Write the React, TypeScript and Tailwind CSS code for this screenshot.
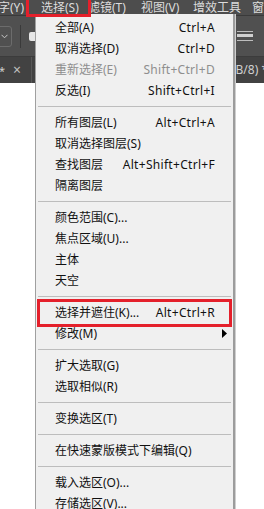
const FONT = { fontFamily: '"Noto Sans", "Noto Sans CJK SC", sans-serif' }

type Item = { label: string; key?: string; disabled?: boolean; marked?: boolean; sub?: boolean }

const groups: Item[][] = [
  [
    { label: '全部(A)', key: 'Ctrl+A' },
    { label: '取消选择(D)', key: 'Ctrl+D' },
    { label: '重新选择(E)', key: 'Shift+Ctrl+D', disabled: true },
    { label: '反选(I)', key: 'Shift+Ctrl+I' },
  ],
  [
    { label: '所有图层(L)', key: 'Alt+Ctrl+A' },
    { label: '取消选择图层(S)' },
    { label: '查找图层', key: 'Alt+Shift+Ctrl+F' },
    { label: '隔离图层' },
  ],
  [
    { label: '颜色范围(C)...' },
    { label: '焦点区域(U)...' },
    { label: '主体' },
    { label: '天空' },
  ],
  [
    { label: '选择并遮住(K)...', key: 'Alt+Ctrl+R', marked: true },
    { label: '修改(M)', sub: true },
  ],
  [{ label: '扩大选取(G)' }, { label: '选取相似(R)' }],
  [{ label: '变换选区(T)' }],
  [{ label: '在快速蒙版模式下编辑(Q)' }],
  [{ label: '载入选区(O)...' }, { label: '存储选区(V)...' }],
]

const menuBar = [
  { label: '文字(Y)', w: 'w-[55px]' },
  { label: '选择(S)', w: 'w-[47px]' },
  { label: '滤镜(T)', w: 'w-[53px]' },
  { label: '视图(V)', w: 'w-[52px]' },
  { label: '增效工具', w: 'w-[59px]' },
  { label: '窗口(W)', w: 'w-[60px]' },
]

export default function App() {
  return (
    <div className="relative w-[264px] h-[509px] overflow-hidden bg-white" style={FONT}>
      {/* Menu bar */}
      <div className="flex h-[15px] ml-[-14px] bg-[#4d4d4d] text-[12px] leading-[15px] text-[#dcdcdc] whitespace-nowrap">
        {menuBar.map(m => (
          <span key={m.label} className={`${m.w} shrink-0`}>{m.label}</span>
        ))}
      </div>
      <div className="h-px bg-[#3a3a3a]" />

      {/* Options bar */}
      <div className="flex h-[40px] items-center bg-[#505050]">
        <div className="ml-[-10px] flex h-[21px] w-[22px] shrink-0 items-center justify-end rounded-[3px] border border-[#6c6c6c] pr-[3px]">
          <svg width="7" height="5" viewBox="0 0 7 5">
            <path d="M0.5 0.8 L3.5 3.8 L6.5 0.8" fill="none" stroke="#c8c8c8" strokeWidth="1" />
          </svg>
        </div>
        <div className="ml-[8px] h-[23px] w-px bg-[#3a3a3a]" />
        <div className="ml-[8px] h-[9px] w-[8px] rounded-[2px] bg-[#e6e6e6]" />
        <div className="ml-auto mr-[11px] flex w-[16px] flex-col gap-[2px]">
          <div className="h-px bg-[#bdbdbd]" />
          <div className="h-[3px] bg-[#d0d0d0]" />
          <div className="mt-[1px] h-px bg-[#bdbdbd]" />
        </div>
      </div>

      {/* Document tabs */}
      <div className="flex h-[27px] items-center border-t border-[#3c3c3c] bg-[#424242] text-[12px] text-[#d0d0d0] whitespace-nowrap">
        <span className="ml-[-1px] text-[11px] leading-none">*</span>
        <span className="ml-[8px] text-[14px] leading-none text-[#c0c0c0]">×</span>
        <div className="ml-[10px] h-full w-px bg-[#575757]" />
        <span className="ml-auto mr-[-4px]">图层 1, RGB/8) *</span>
      </div>

      {/* Select menu */}
      <div className="absolute left-[35px] top-[14px] w-[198px] border-l border-[#a0a0a0] bg-[#f0f0f0] pt-[3px] pb-[20px] text-[12px] shadow-[2px_0_0_#9c9c9c,3px_0_0_#cfcfcf]">
        {groups.map((group, gi) => (
          <div key={gi}>
            {gi > 0 && (
              <div className="flex h-[11px] items-center">
                <div className="ml-[2px] mr-[2px] h-px flex-1 bg-[#bdbdbd]" />
              </div>
            )}
            {group.map(item => (
              <div
                key={item.label}
                className={`relative flex h-[21px] items-center justify-between pl-[19px] pr-[18px] whitespace-nowrap ${
                  item.disabled ? 'text-[#8e8e8e]' : 'text-[#111111]'
                }`}
              >
                <span>{item.label}</span>
                {item.key && <span className="tracking-[0.3px]">{item.key}</span>}
                {item.sub && (
                  <svg className="absolute right-[6px] top-[6px]" width="5" height="9" viewBox="0 0 5 9">
                    <path d="M0 0 L5 4.5 L0 9 Z" fill="#000" />
                  </svg>
                )}
                {item.marked && (
                  <div className="absolute left-[1px] right-[1px] top-[-3px] bottom-[-4px] border-[3px] border-[#e4202b]" />
                )}
              </div>
            ))}
          </div>
        ))}
      </div>

      {/* Annotation on the menu title */}
      <div className="absolute left-[26px] top-[-3px] h-[20px] w-[65px] border-[3px] border-[#e4202b]" />
    </div>
  )
}
